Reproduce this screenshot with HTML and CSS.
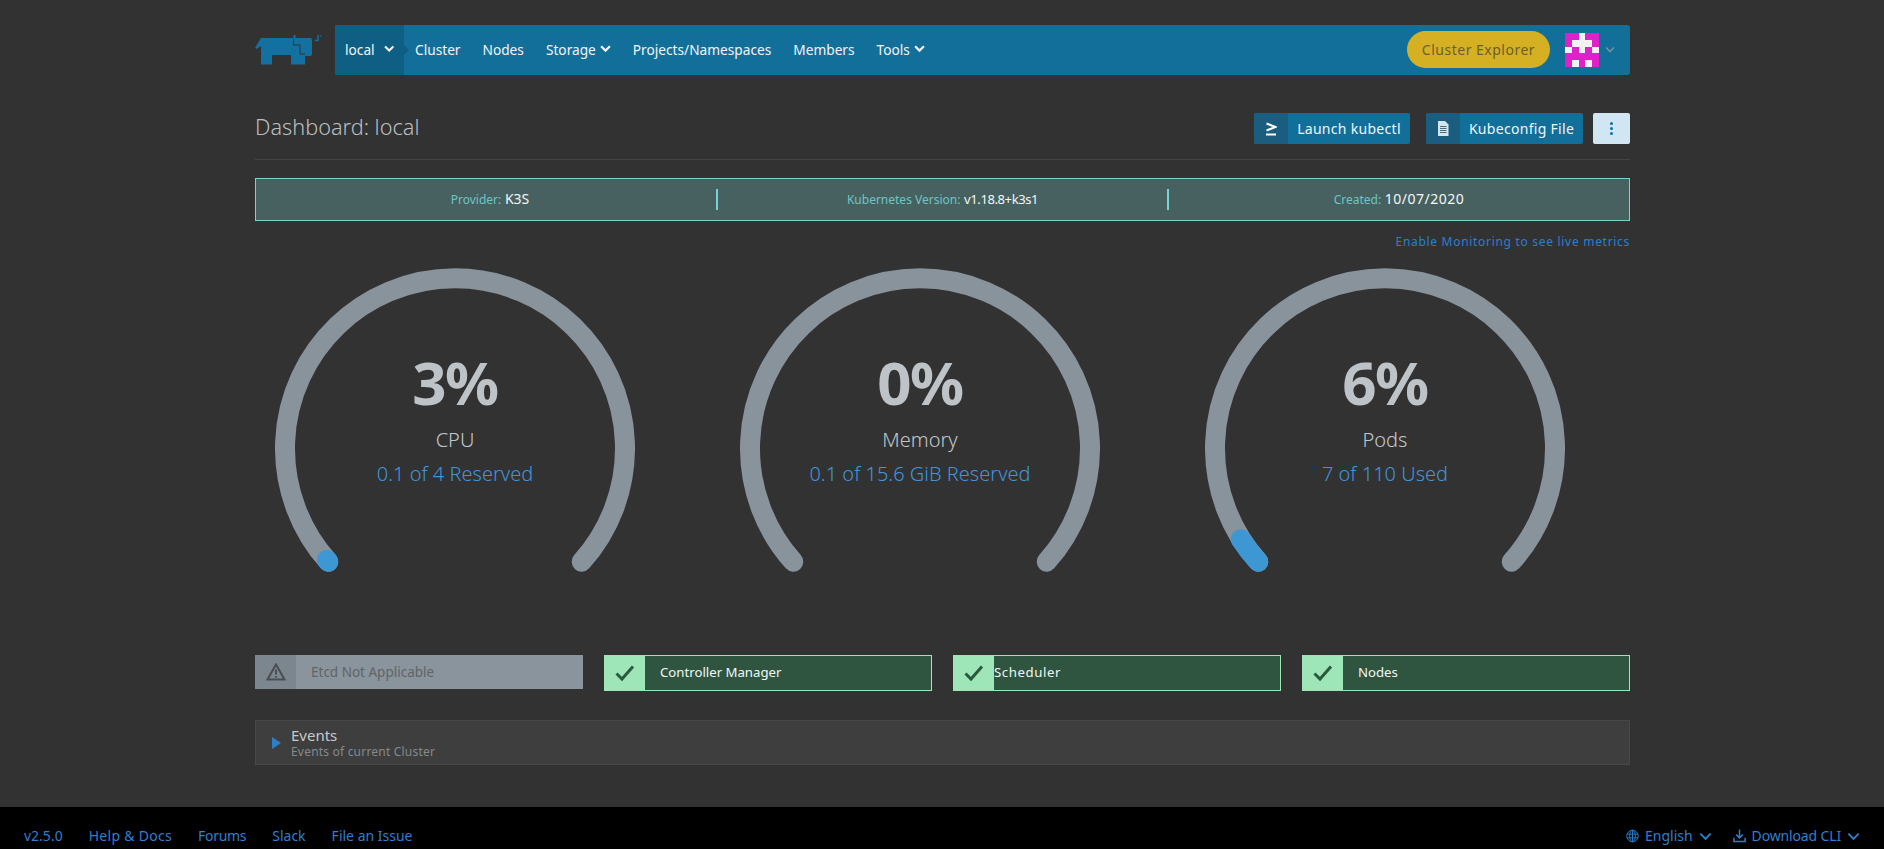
FILE: index.html
```html
<!DOCTYPE html>
<html lang="en">
<head>
<meta charset="utf-8">
<title>Dashboard: local</title>
<link rel="stylesheet" href="styles.css">
</head>
<body>
<div class="page">
  <main class="wrap">
    <header class="topbar">
      <a class="logo">
        <svg width="80" height="50" viewBox="5 0 80 50"><path class="logo-fill" d="M11 13H43.5V10H45.5V13H60Q62 13 62 15V29Q62 31 60 31H55V39.5H41V30H22V39.5H11V21L6.5 24L5 23Z"/><path class="logo-cut" d="M43.5 14V20H50V29H55"/><path class="logo-horn" d="M65 15.5H68V10"/><circle class="logo-fill" cx="70.5" cy="11" r=".8"/></svg>
      </a>
      <nav class="nav">
        <a class="nav-item active">local <svg class="chev" viewBox="0 0 10 7"><path d="M1 1L5 5L9 1"/></svg></a>
        <a class="nav-item">Cluster</a>
        <a class="nav-item">Nodes</a>
        <a class="nav-item">Storage <svg class="chev" viewBox="0 0 10 7"><path d="M1 1L5 5L9 1"/></svg></a>
        <a class="nav-item">Projects/Namespaces</a>
        <a class="nav-item">Members</a>
        <a class="nav-item">Tools <svg class="chev" viewBox="0 0 10 7"><path d="M1 1L5 5L9 1"/></svg></a>
        <div class="nav-right">
          <a class="explorer">Cluster Explorer</a>
          <svg class="avatar" width="34" height="34" viewBox="0 0 5 5" shape-rendering="crispEdges"><rect width="5" height="5" fill="#e020c8"/><path fill="#f2f2f2" d="M2 0H3V1H4V2H3V3H2V2H1V1H2ZM0 2H1V3H0ZM4 2H5V3H4ZM1 4H2V5H1ZM3 4H4V5H3Z"/></svg>
          <svg class="chev dim" viewBox="0 0 10 7"><path d="M1 1L5 5L9 1"/></svg>
        </div>
      </nav>
    </header>

    <section class="title-row">
      <h1>Dashboard: local</h1>
      <div class="actions">
        <a class="btn btn-launch"><span class="btn-ico"><svg width="12" height="14" viewBox="0 0 12 14"><path class="stroke-white" d="M1.5 1.5L10.5 5L1.5 8.5M1 12.5H11"/></svg></span><span class="btn-text">Launch kubectl</span></a>
        <a class="btn"><span class="btn-ico"><svg width="12" height="15" viewBox="0 0 12 15"><path class="doc" d="M1 0H8L11.5 3.5V15H1Z"/><path class="doc-lines" d="M3 5.5H9.5M3 7.5H9.5M3 9.5H9.5M3 11.5H9.5"/></svg></span><span class="btn-text">Kubeconfig File</span></a>
        <a class="btn-more"><i></i><i></i><i></i></a>
      </div>
    </section>

    <section class="info">
      <div class="info-cell first"><span class="info-key">Provider:</span> <span class="info-val">K3S</span></div>
      <div class="info-cell"><span class="info-key">Kubernetes Version:</span> <span class="info-val version">v1.18.8+k3s1</span></div>
      <div class="info-cell"><span class="info-key">Created:</span> <span class="info-val date">10/07/2020</span></div>
    </section>
    <div class="enable"><a>Enable Monitoring to see live metrics</a></div>

    <section class="gauges">
      <div class="gauge">
        <svg width="360" height="320" viewBox="0 0 360 320"><path class="track" d="M53.3 293.7A170 170 0 1 1 306.7 293.7"/><path class="fill" d="M53.3 293.7L52 292"/></svg>
        <div class="gauge-text"><div class="pct">3%</div><div class="gname">CPU</div><div class="gsub">0.1 of 4 Reserved</div></div>
      </div>
      <div class="gauge">
        <svg width="360" height="320" viewBox="0 0 360 320"><path class="track" d="M53.3 293.7A170 170 0 1 1 306.7 293.7"/></svg>
        <div class="gauge-text"><div class="pct">0%</div><div class="gname">Memory</div><div class="gsub">0.1 of 15.6 GiB Reserved</div></div>
      </div>
      <div class="gauge">
        <svg width="360" height="320" viewBox="0 0 360 320"><path class="track" d="M53.3 293.7A170 170 0 1 1 306.7 293.7"/><path class="fill" d="M53.3 293.7A170 170 0 0 1 35.7 271.3"/></svg>
        <div class="gauge-text"><div class="pct">6%</div><div class="gname">Pods</div><div class="gsub">7 of 110 Used</div></div>
      </div>
    </section>

    <section class="status-row">
      <div class="status na"><span class="status-ico"><svg width="20" height="18" viewBox="0 0 20 18"><path class="tri" d="M10 1.5L18.5 16.5H1.5Z"/><path class="tri-mark" d="M10 6.5V11.5M10 13V14.5"/></svg></span><span class="status-text">Etcd Not Applicable</span></div>
      <div class="status ok"><span class="status-ico"><svg width="20" height="18" viewBox="0 0 20 18"><path class="check" d="M1.5 9.5L7 15L18 2.5"/></svg></span><span class="status-text">Controller Manager</span></div>
      <div class="status ok"><span class="status-ico"><svg width="20" height="18" viewBox="0 0 20 18"><path class="check" d="M1.5 9.5L7 15L18 2.5"/></svg></span><span class="status-text tight">Scheduler</span></div>
      <div class="status ok"><span class="status-ico"><svg width="20" height="18" viewBox="0 0 20 18"><path class="check" d="M1.5 9.5L7 15L18 2.5"/></svg></span><span class="status-text">Nodes</span></div>
    </section>

    <section class="events">
      <svg class="caret" width="9" height="12" viewBox="0 0 9 12"><path d="M0 0L9 6L0 12Z"/></svg>
      <div><div class="events-title">Events</div><div class="events-sub">Events of current Cluster</div></div>
    </section>
  </main>

  <footer class="footer">
    <div class="foot-left"><a>v2.5.0</a><a class="wide">Help &amp; Docs</a><a class="narrow">Forums</a><a>Slack</a><a>File an Issue</a></div>
    <div class="foot-right">
      <a><svg width="13" height="14" viewBox="0 0 14 14"><g class="globe"><circle cx="7" cy="7" r="6.2"/><ellipse cx="7" cy="7" rx="3" ry="6.2"/><path d="M1 5H13M1 9H13M7 1V13"/></g></svg><span>English</span><svg class="fchev" viewBox="0 0 14 9"><path d="M1.5 1.5L7 7L12.5 1.5"/></svg></a>
      <a><svg width="13" height="14" viewBox="0 0 14 14"><path class="dl" d="M7 0V9M3.5 5.5L7 9L10.5 5.5M1 9V13H13V9"/></svg><span class="dl-text">Download CLI</span><svg class="fchev" viewBox="0 0 14 9"><path d="M1.5 1.5L7 7L12.5 1.5"/></svg></a>
    </div>
  </footer>
</div>
</body>
</html>
```
FILE: styles.css
```css
* { box-sizing: border-box; }
html, body { margin: 0; height: 100%; }
body { background: #323232; color: #c5c9cc; font-family: "Noto Sans", "Open Sans", sans-serif; font-size: 14px; overflow: hidden; }
.page { height: 849px; display: flex; flex-direction: column; }
.wrap { width: 1375px; margin-left: 255px; padding-top: 25px; flex: 1; }

.topbar { display: flex; height: 50px; }
.logo { width: 80px; height: 50px; display: block; }
.logo svg { display: block; }
.logo-fill { fill: #1271a0; }
.logo-cut { fill: none; stroke: #323232; stroke-width: 1; }
.logo-horn { fill: none; stroke: #1271a0; stroke-width: 1.6; }
.nav { flex: 1; background: #126f9a; display: flex; align-items: center; border-radius: 0 3px 3px 0; height: 50px; color: #f2f4f5; }
.nav-item { height: 100%; display: flex; align-items: center; gap: 4px; padding: 0 11px 2px; white-space: nowrap; font-size: 13.7px; }
.nav-item.active { background: #0f5f85; width: 69px; padding: 0 10px 2px; gap: 9px; position: relative; }
.nav-item.active::after { content: ""; position: absolute; left: 100%; top: 20px; border-left: 5px solid #0f5f85; border-top: 5px solid transparent; border-bottom: 5px solid transparent; }
.chev { width: 11px; height: 8px; fill: none; stroke: #f2f4f5; stroke-width: 2; }
.chev.dim { width: 10px; stroke: #7d97a6; stroke-width: 1.3; }
.nav-right { margin-left: auto; display: flex; align-items: center; padding: 0 15px 1px 0; }
.explorer { width: 143px; height: 37px; border-radius: 19px; background: #d6b023; color: #6b5f2c; display: flex; align-items: center; justify-content: center; letter-spacing: .5px; font-size: 14px; margin-right: 15px; }
.avatar { margin-right: 6px; }

.title-row { display: flex; align-items: center; justify-content: space-between; height: 85px; border-bottom: 1px solid #444; padding: 38px 0 15px; }
h1 { margin: 0 0 4px; font-size: 21.7px; font-weight: 300; color: #b9bec2; }
.actions { display: flex; gap: 16px; }
.btn { height: 31px; background: #126f9a; color: #f0f6f9; display: flex; align-items: center; border-radius: 2px; width: 157px; overflow: hidden; }
.btn-launch { width: 156px; }
.btn-ico { width: 34px; height: 100%; background: #1b5d7e; display: flex; align-items: center; justify-content: center; }
.btn-text { flex: 1; text-align: center; font-size: 14px; letter-spacing: .3px; }
.stroke-white { fill: none; stroke: #fff; stroke-width: 2; }
.doc { fill: #d2e6f0; }
.doc-lines { stroke: #4b6d7d; stroke-width: 1; }
.btn-more { width: 37px; height: 31px; background: #d0e6f2; margin-left: -6px; border-radius: 2px; display: flex; flex-direction: column; align-items: center; justify-content: center; gap: 2px; }
.btn-more i { width: 3px; height: 3px; background: #126f9a; border-radius: 50%; }

.info { margin-top: 18px; height: 43px; background: #476161; border: 1px solid #78d2d2; display: grid; grid-template-columns: 462px 451px 1fr; align-items: center; }
.info-cell { text-align: center; height: 21px; line-height: 19px; border-right: 2px solid #78d2d2; font-size: 14px; }
.info-cell.first { padding-left: 8px; }
.info-cell:last-child { border-right: 0; }
.info-key { font-size: 12px; color: #6fc4c4; }
.info-val { color: #f5f7f7; }
.info-val.version { font-size: 13px; letter-spacing: -.4px; }
.info-val.date { letter-spacing: .5px; }
.enable { text-align: right; margin-top: 12px; font-size: 12px; color: #2e7fc9; letter-spacing: .7px; height: 17px; line-height: 17px; }

.gauges { display: grid; grid-template-columns: repeat(3, 360px); column-gap: 105px; padding-left: 20px; margin-top: 18px; }
.gauge { position: relative; height: 320px; }
.track, .fill { fill: none; stroke-width: 20; stroke-linecap: round; }
.track { stroke: #88939c; }
.fill { stroke: #3d97d3; }
.gauge-text { position: absolute; left: 0; right: 0; top: 78px; text-align: center; }
.pct { font-size: 60px; font-weight: 700; line-height: 72px; color: #bec3c7; letter-spacing: -1.5px; }
.gname { font-size: 20px; line-height: 28px; margin-top: 8px; color: #c2c6ca; font-weight: 300; }
.gsub { font-size: 20px; line-height: 28px; margin-top: 6px; color: #3f95dc; font-weight: 300; }

.status-row { display: grid; grid-template-columns: repeat(4, 328px); column-gap: 21px; margin-top: 67px; align-items: start; }
.status { display: flex; align-items: center; height: 36px; font-size: 13.2px; }
.status-ico { width: 41px; height: 100%; display: flex; align-items: center; justify-content: center; flex: none; }
.status-text { padding: 0 0 2px 15px; }
.status-text.tight { padding-left: 0; letter-spacing: .6px; }
.status.na { height: 34px; background: #8a949c; color: #5e6468; font-size: 13.5px; }
.status.na .status-text { padding-bottom: 0; }
.status.na .status-ico { background: #7c868e; }
.status.ok { background: #2f5540; color: #f2f7f4; border: 1px solid #9ee6b8; }
.status.ok .status-ico { background: #9ee6b8; margin-left: -1px; height: 36px; }
.tri { fill: none; stroke: #4a4e52; stroke-width: 2; }
.tri-mark { stroke: #4a4e52; stroke-width: 2; fill: none; }
.check { fill: none; stroke: #2a5a3e; stroke-width: 3; }

.events { margin-top: 29px; height: 45px; background: #3e3e3e; border: 1px solid #484848; display: flex; align-items: center; padding-left: 16px; gap: 10px; }
.caret path { fill: #2d7fc8; }
.events-title { font-size: 15px; line-height: 18px; color: #c5c9cc; }
.events-sub { font-size: 12px; line-height: 16px; color: #85898d; letter-spacing: .2px; }

.footer { height: 42px; background: #000; display: flex; justify-content: space-between; padding: 15px 24px 0; color: #2f7fd0; font-size: 14px; line-height: 28px; }
.foot-left { display: flex; gap: 26px; }
.foot-left .wide { letter-spacing: .3px; }
.foot-left .narrow { letter-spacing: -.3px; }
.foot-right { display: flex; gap: 21px; }
.foot-right a { display: flex; align-items: center; gap: 6px; height: 28px; }
.dl-text { letter-spacing: -.15px; }
.globe { fill: none; stroke: #2f7fd0; stroke-width: 1; }
.dl { fill: none; stroke: #2f7fd0; stroke-width: 1.6; }
.fchev { width: 13px; height: 9px; fill: none; stroke: #2f7fd0; stroke-width: 2; }
```
